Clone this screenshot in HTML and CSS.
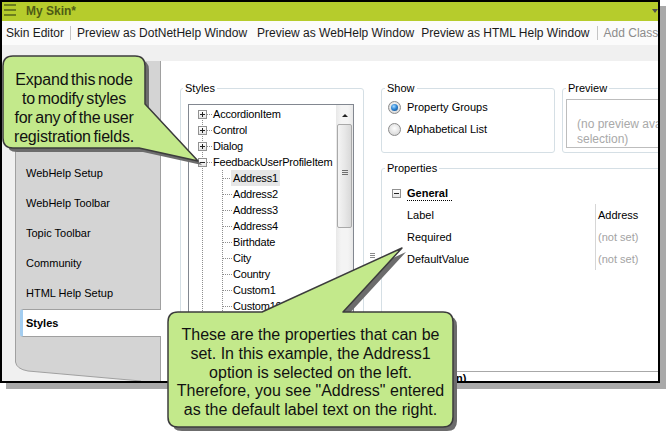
FILE: index.html
```html
<!DOCTYPE html>
<html>
<head>
<meta charset="utf-8">
<link rel="stylesheet" href="styles.css">
</head>
<body>
<div class="window">
  <div class="titlebar">
    <svg class="hamburger" width="12" height="12" viewBox="0 0 12 12"><path d="M0 1H12M0 6H12M0 11H12" stroke="#55641a" stroke-width="1.3"/></svg>
    <span class="title">My Skin*</span>
    <span class="tb-arrow"></span>
  </div>
  <div class="toolbar">
    <span class="tb-item">Skin Editor</span>
    <span class="sep s1"></span>
    <span class="tb-item i2">Preview as DotNetHelp Window</span>
    <span class="tb-item i3">Preview as WebHelp Window</span>
    <span class="tb-item i4">Preview as HTML Help Window</span>
    <span class="sep s2"></span>
    <span class="tb-item i5 disabled">Add Class</span>
  </div>
  <div class="main">
    <div class="tabs">
      <div class="tab-list">
        <div class="tab">General</div>
        <div class="tab">Size</div>
        <div class="tab">Navigation</div>
        <div class="tab">WebHelp Setup</div>
        <div class="tab">WebHelp Toolbar</div>
        <div class="tab">Topic Toolbar</div>
        <div class="tab">Community</div>
        <div class="tab">HTML Help Setup</div>
        <div class="tab active">Styles</div>
      </div>
      <svg class="tab-foot" width="145" height="19" viewBox="0 0 145 19">
        <path d="M0 0H145V19H126L13 9Q1.5 7 0.5 0Z" fill="#d4d4d4"/>
        <path d="M0.5 0Q1.5 7 13 9L126 19" fill="none" stroke="#a0a0a0" stroke-width="1"/>
      </svg>
    </div>
    <div class="content">
      <fieldset class="group styles-group">
        <legend>Styles</legend>
        <div class="tree">
          <div class="tree-list">
            <div class="row root first"><span class="exp plus"></span><span class="label">AccordionItem</span></div>
            <div class="row root"><span class="exp plus"></span><span class="label">Control</span></div>
            <div class="row root"><span class="exp plus"></span><span class="label">Dialog</span></div>
            <div class="row root"><span class="exp"></span><span class="label">FeedbackUserProfileItem</span></div>
            <div class="row child"><span class="label sel">Address1</span></div>
            <div class="row child"><span class="label">Address2</span></div>
            <div class="row child"><span class="label">Address3</span></div>
            <div class="row child"><span class="label">Address4</span></div>
            <div class="row child"><span class="label">Birthdate</span></div>
            <div class="row child"><span class="label">City</span></div>
            <div class="row child"><span class="label">Country</span></div>
            <div class="row child"><span class="label">Custom1</span></div>
            <div class="row child"><span class="label">Custom10</span></div>
            <div class="row child"><span class="label">Custom2</span></div>
            <div class="row child"><span class="label">Custom3</span></div>
            <div class="row child"><span class="label">Custom4</span></div>
            <div class="row child"><span class="label">Custom5</span></div>
          </div>
          <div class="vscroll">
            <div class="sb-btn"><span class="sb-up"></span></div>
            <div class="sb-thumb"><span class="grip"></span></div>
          </div>
        </div>
      </fieldset>
      <div class="splitter"><span class="split-grip"></span></div>
      <div class="right">
        <div class="toprow">
          <fieldset class="group show-group">
            <legend>Show</legend>
            <div class="radio-row first"><span class="radio"><span class="dot"></span></span>Property Groups</div>
            <div class="radio-row"><span class="radio"></span>Alphabetical List</div>
          </fieldset>
          <fieldset class="group preview-group">
            <legend>Preview</legend>
            <div class="preview-box">(no preview available for this selection)</div>
          </fieldset>
        </div>
        <fieldset class="group props-group">
          <legend>Properties</legend>
          <div class="prop-head"><span class="exp"></span><span class="general">General</span></div>
          <div class="prop-row"><span class="prop-name">Label</span><span class="prop-val">Address</span></div>
          <div class="prop-row"><span class="prop-name">Required</span><span class="prop-val notset">(not set)</span></div>
          <div class="prop-row"><span class="prop-name">DefaultValue</span><span class="prop-val notset">(not set)</span></div>
          <div class="desc">(No description)</div>
        </fieldset>
      </div>
    </div>
  </div>
</div>

<svg class="overlay" width="666" height="446" viewBox="0 0 666 446">
  <g transform="translate(4 4)" fill="#6c6c6c">
    <path d="M13 56H135Q145 56 145 66V104L198 161L139 148H13Q3 148 3 138V66Q3 56 13 56Z"/>
    <path d="M178 312H262L402 248L343 312H443Q453 312 453 322V417Q453 427 443 427H178Q168 427 168 417V322Q168 312 178 312Z"/>
  </g>
  <g fill="#c3e98b" stroke="#3c3c3c" stroke-width="1.5" stroke-linejoin="round">
    <path d="M13 56H135Q145 56 145 66V104L198 161L139 148H13Q3 148 3 138V66Q3 56 13 56Z"/>
    <path d="M178 312H262L402 248L343 312H443Q453 312 453 322V417Q453 427 443 427H178Q168 427 168 417V322Q168 312 178 312Z"/>
  </g>
</svg>
<div class="callout-text c1">Expand this node<br>to modify styles<br>for any of the user<br>registration fields.</div>
<div class="callout-text c2">These are the properties that can be<br>set. In this example, the Address1<br>option is selected on the left.<br>Therefore, you see "Address" entered<br>as the default label text on the right.</div>
</body>
</html>
```
FILE: styles.css
```css
html, body {
  margin: 0;
  padding: 0;
}
body {
  width: 666px;
  height: 446px;
  overflow: hidden;
  background: #fff;
  font-family: "Liberation Sans", Arial, sans-serif;
  color: #000;
}

.window {
  width: 660px;
  height: 383px;
  box-sizing: border-box;
  border: 2px solid #000;
  box-shadow: 6px 6px 0 #a9a9a9;
  display: flex;
  flex-direction: column;
  overflow: hidden;
  background: #f0f0f0;
}

/* title bar */
.titlebar {
  height: 19px;
  flex: none;
  background: #b6cc2c;
  display: flex;
  align-items: center;
  padding: 0 0 2px 2px;
  box-sizing: border-box;
}
.hamburger {
  align-self: flex-start;
  margin-top: 2px;
  flex: none;
}
.title {
  margin-left: 10px;
  font-size: 12px;
  font-weight: bold;
  color: #4e5c14;
}
.tb-arrow {
  margin-left: auto;
  width: 0;
  height: 0;
  border-left: 3.5px solid transparent;
  border-right: 3.5px solid transparent;
  border-top: 4px solid #4f4f4f;
}

/* toolbar */
.toolbar {
  height: 24px;
  flex: none;
  display: flex;
  align-items: center;
  padding-left: 4px;
  background: #fbfbfb;
  font-size: 12px;
  color: #1a1a1a;
  white-space: nowrap;
}
.sep {
  width: 1px;
  height: 14px;
  background: #c5c5c5;
  flex: none;
}
.s1 { margin: 0 6px 0 6px; }
.i3 { margin-left: 10px; }
.i4 { margin-left: 7px; }
.s2 { margin: 0 6px 0 7px; }
.i2 { margin-left: 0; }
.disabled { color: #8c8c8c; }

/* main area */
.main {
  flex: 1;
  display: flex;
  padding-top: 16px;
  min-height: 0;
}

.tabs {
  width: 145px;
  flex: none;
  margin-left: 13px;
  display: flex;
  flex-direction: column;
  z-index: 1;
}
.tab-list {
  flex: 1;
  background: #d4d4d4;
  border-left: 1px solid #a0a0a0;
  padding-top: 8px;
}
.tab {
  height: 28px;
  margin: 0 0 2px 4px;
  padding-left: 6px;
  display: flex;
  align-items: center;
  font-size: 11px;
  color: #000;
}
.tab.active {
  box-sizing: border-box;
  background: #fff;
  border: 1px solid #a0a0a0;
  border-left: 3px solid #a3cdf0;
  border-right: none;
  border-radius: 3px 0 0 3px;
  margin-right: -1px;
  padding-left: 3px;
  font-weight: bold;
}
.tab-foot {
  display: block;
  flex: none;
}

.content {
  flex: 1;
  min-width: 0;
  background: #fff;
  border-left: 1px solid #a0a0a0;
  display: flex;
  align-items: flex-start;
  padding: 20px 0 0 19px;
  overflow: hidden;
}

/* group boxes */
.group {
  margin: 0;
  padding: 0;
  border: 1px solid #d5dfe5;
  border-radius: 3px;
  min-width: 0;
  box-sizing: border-box;
  flex: none;
}
.group > legend {
  margin-left: 3px;
  padding: 0 2px;
  font-size: 11px;
  line-height: 14px;
  color: #000;
}
.styles-group > legend { margin-left: 2px; }

.styles-group {
  width: 184px;
  height: 294px;
}

/* tree */
.tree {
  margin: 9px 0 0 7px;
  width: 166px;
  height: 264px;
  box-sizing: border-box;
  border: 1px solid #828790;
  display: flex;
  overflow: hidden;
}
.tree-list {
  flex: 1;
  padding-top: 1px;
  font-size: 11px;
  letter-spacing: -0.2px;
  overflow: hidden;
}
.row {
  height: 16px;
  display: flex;
  align-items: center;
  white-space: nowrap;
  background-repeat: no-repeat;
}
.row.root {
  background-image:
    repeating-linear-gradient(to bottom, #8f8f8f 0 1px, transparent 1px 2px),
    repeating-linear-gradient(to right, #8f8f8f 0 1px, transparent 1px 2px);
  background-position: 13px 0, 18px 8px;
  background-size: 1px 16px, 6px 1px;
}
.row.root.first {
  background-position: 13px 8px, 18px 8px;
  background-size: 1px 8px, 6px 1px;
}
.row.child {
  padding-left: 44px;
  background-image:
    repeating-linear-gradient(to bottom, #8f8f8f 0 1px, transparent 1px 2px),
    repeating-linear-gradient(to bottom, #8f8f8f 0 1px, transparent 1px 2px),
    repeating-linear-gradient(to right, #8f8f8f 0 1px, transparent 1px 2px);
  background-position: 13px 0, 33px 0, 34px 8px;
  background-size: 1px 16px, 1px 16px, 9px 1px;
}
.row .label {
  line-height: 16px;
}
.row.root .label { margin-left: 6px; }
.label.sel {
  background: #e6e6e6;
  padding: 0 2px;
  margin-left: -2px;
}

.exp {
  width: 9px;
  height: 9px;
  flex: none;
  box-sizing: border-box;
  border: 1px solid #919191;
  background: linear-gradient(#ffffff, #e4e4e4);
  position: relative;
}
.row .exp { margin-left: 9px; }
.exp::before {
  content: "";
  position: absolute;
  left: 1px;
  top: 3px;
  width: 5px;
  height: 1px;
  background: #222;
}
.exp.plus::after {
  content: "";
  position: absolute;
  left: 3px;
  top: 1px;
  width: 1px;
  height: 5px;
  background: #222;
}

/* scrollbar */
.vscroll {
  width: 17px;
  flex: none;
  background: linear-gradient(to right, #e8e8e8, #f4f4f4 30%, #f4f4f4 70%, #e8e8e8);
  display: flex;
  flex-direction: column;
  align-items: center;
}
.sb-btn {
  height: 18px;
  width: 17px;
  display: flex;
  align-items: center;
  justify-content: center;
}
.sb-up {
  width: 0;
  height: 0;
  border-left: 3px solid transparent;
  border-right: 3px solid transparent;
  border-bottom: 3px solid #222;
  margin-top: 2px;
}
.sb-thumb {
  margin-top: 1px;
  width: 15px;
  height: 104px;
  box-sizing: border-box;
  border: 1px solid #a9a9a9;
  border-radius: 2px;
  background: linear-gradient(to right, #f4f4f4, #e8e8e8 50%, #d9d9d9);
  display: flex;
  align-items: center;
  justify-content: center;
}
.grip {
  width: 6px;
  height: 5px;
  background: repeating-linear-gradient(to bottom, #6f6f6f 0 1px, transparent 1px 2px);
  margin-bottom: 8px;
}

/* splitter */
.splitter {
  width: 17px;
  flex: none;
  display: flex;
  justify-content: center;
  padding-top: 172px;
}
.split-grip {
  width: 5px;
  height: 5px;
  background: repeating-linear-gradient(to bottom, #8a8a8a 0 1px, transparent 1px 2px);
}

/* right column */
.right {
  width: 300px;
  flex: none;
}
.toprow {
  display: flex;
  gap: 7px;
}
.show-group {
  width: 174px;
  height: 72px;
}
.radio-row {
  height: 22px;
  display: flex;
  align-items: center;
  padding-left: 6px;
  font-size: 11px;
}
.radio-row.first { margin-top: 1px; }
.radio {
  width: 13px;
  height: 13px;
  box-sizing: border-box;
  border-radius: 50%;
  border: 1px solid #8b8b8b;
  background: radial-gradient(circle at 50% 40%, #fdfdfd, #e2e2e2 60%, #c9c9c9);
  margin-right: 6px;
  display: flex;
  align-items: center;
  justify-content: center;
  flex: none;
}
.dot {
  width: 7px;
  height: 7px;
  border-radius: 50%;
  background: radial-gradient(circle at 40% 35%, #a8dcff 0, #2f86d6 45%, #0b3f78 100%);
}

.preview-group {
  width: 200px;
  height: 72px;
}
.preview-box {
  margin: 4px 0 0 3px;
  width: 190px;
  height: 49px;
  box-sizing: border-box;
  border: 1px solid #bdbdbd;
  padding: 17px 0 0 10px;
  font-size: 12px;
  line-height: 15px;
  color: #a9a9a9;
  overflow: hidden;
}

.group.props-group {
  margin-top: 8px;
  width: 300px;
  height: 240px;
}
.prop-head {
  margin-top: 8px;
  height: 21px;
  display: flex;
  align-items: center;
  padding-left: 10px;
  font-size: 11px;
  font-weight: bold;
}
.general {
  margin-left: 6px;
  padding-right: 4px;
  line-height: 13px;
  border-bottom: 1px dotted #000;
}
.prop-row {
  height: 22px;
  display: flex;
  font-size: 11px;
}
.prop-name {
  width: 213px;
  flex: none;
  box-sizing: border-box;
  padding-left: 25px;
  display: flex;
  align-items: center;
}
.prop-val {
  border-left: 1px solid #d6d6d6;
  padding-left: 2px;
  display: flex;
  align-items: center;
}
.notset { color: #a3a3a3; }
.desc {
  margin-top: 101px;
  border-top: 1px solid #a8a8a8;
  padding-top: 0;
  font-size: 11px;
  line-height: 13px;
  font-weight: bold;
}

/* callouts (overlay) */
.overlay {
  position: absolute;
  left: 0;
  top: 0;
  z-index: 5;
  pointer-events: none;
}
.callout-text {
  position: absolute;
  z-index: 6;
  text-align: center;
  font-family: "Liberation Sans", Arial, sans-serif;
  font-size: 16px;
  color: #111;
  white-space: nowrap;
}
.c1 {
  left: 3px;
  top: 56px;
  width: 142px;
  padding-top: 14px;
  line-height: 19px;
  letter-spacing: -0.2px;
  word-spacing: -1.5px;
}
.c2 {
  left: 168px;
  top: 312px;
  width: 285px;
  padding-top: 14px;
  line-height: 18.75px;
}
```
